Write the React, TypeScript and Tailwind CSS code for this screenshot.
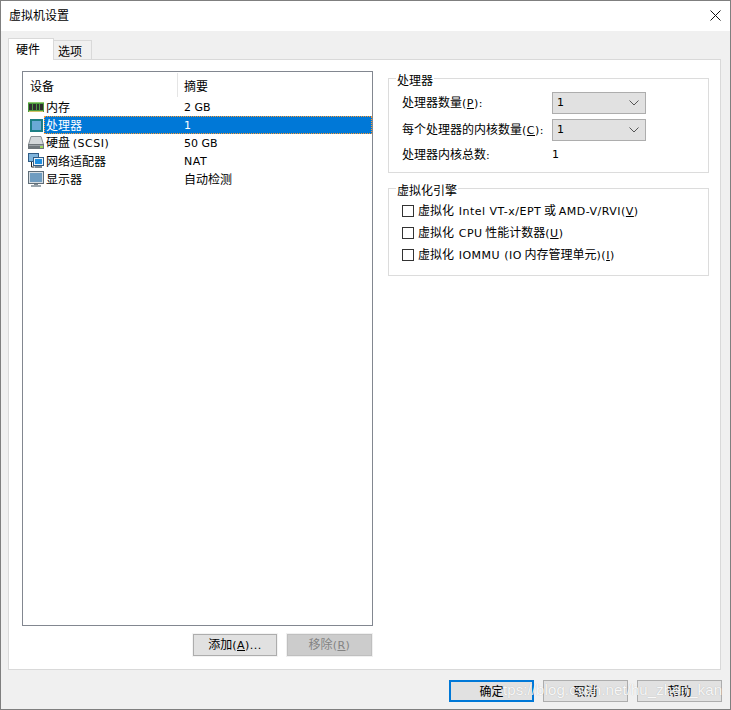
const font = { fontFamily: '"Noto Sans CJK SC", "Liberation Sans", sans-serif' }

// latin runs in the reference are wider than the CJK font's own
function L({ children }: { children: React.ReactNode }) {
  return <span className="font-['DejaVu_Sans'] text-[11px]">{children}</span>
}

function W({ children }: { children: React.ReactNode }) {
  return <span className="font-['DejaVu_Sans'] text-[11px] tracking-[0.5px]">{children}</span>
}

function RamIcon() {
  return (
    <svg width="16" height="16" viewBox="0 0 16 16" className="shrink-0">
      <rect x="0" y="3" width="16" height="10" fill="#4c9a3f" />
      <rect x="0" y="3" width="16" height="1" fill="#8fca6e" />
      <rect x="1" y="5" width="3" height="6" fill="#2e2e2e" />
      <rect x="5" y="5" width="3" height="6" fill="#2e2e2e" />
      <rect x="9" y="5" width="2" height="6" fill="#2e2e2e" />
      <rect x="12" y="5" width="3" height="6" fill="#2e2e2e" />
      <rect x="1" y="12" width="14" height="1" fill="#d4c26a" />
    </svg>
  )
}

function CpuIcon() {
  return (
    <svg width="16" height="16" viewBox="0 0 16 16" className="shrink-0">
      <rect x="2" y="2" width="13" height="13" fill="#1d7f86" />
      <rect x="4" y="4" width="9" height="9" fill="#6aa9d6" />
    </svg>
  )
}

function DiskIcon() {
  return (
    <svg width="16" height="16" viewBox="0 0 16 16" className="shrink-0">
      <path d="M3 1.5h10l2.5 8h-15z" fill="#d3d7da" stroke="#8a9095" />
      <rect x="0" y="9" width="16" height="5" fill="#6f767b" />
      <rect x="1" y="10" width="14" height="1" fill="#9aa0a5" />
      <rect x="12" y="11" width="3" height="2" fill="#9cd65a" />
    </svg>
  )
}

function NetIcon() {
  return (
    <svg width="16" height="16" viewBox="0 0 16 16" className="shrink-0">
      <rect x="0.5" y="0.5" width="10" height="8" fill="#7fb4dc" stroke="#2f5c86" />
      <path d="M3.5 9v5h3" fill="none" stroke="#222" />
      <rect x="5.5" y="4.5" width="10" height="8" fill="#e8f1f8" stroke="#2f5c86" />
      <rect x="7" y="6" width="7" height="5" fill="#1f8fe0" />
      <rect x="7" y="13" width="7" height="2" fill="#7c8790" />
    </svg>
  )
}

function MonitorIcon() {
  return (
    <svg width="16" height="16" viewBox="0 0 16 16" className="shrink-0">
      <rect x="0.5" y="0.5" width="15" height="12" fill="#d5dde3" stroke="#5f6d78" />
      <rect x="2" y="2" width="12" height="9" fill="#6f9cc0" />
      <rect x="6" y="13" width="4" height="1" fill="#7f8a93" />
      <rect x="3" y="14" width="10" height="2" fill="#9aa5ad" />
    </svg>
  )
}

const devices = [
  { name: "内存", summary: <L>2 GB</L>, icon: <RamIcon /> },
  { name: "处理器", summary: <L>1</L>, icon: <CpuIcon />, selected: true },
  { name: <>硬盘 <W>(SCSI)</W></>, summary: <L>50 GB</L>, icon: <DiskIcon /> },
  { name: "网络适配器", summary: <W>NAT</W>, icon: <NetIcon /> },
  { name: "显示器", summary: "自动检测", icon: <MonitorIcon /> },
]

function Combo() {
  return (
    <div className="w-[94px] h-[22px] border border-[#adadad] bg-[#e1e1e1] flex items-center justify-between pl-[4px] pr-[6px]">
      <L>1</L>
      <svg width="10" height="6" viewBox="0 0 10 6">
        <path d="M0.5 0.5L5 5L9.5 0.5" fill="none" stroke="#555" />
      </svg>
    </div>
  )
}

function Check({ children }: { children: React.ReactNode }) {
  return (
    <div className="h-[22px] flex items-center gap-[4px]">
      <div className="w-[12px] h-[12px] border border-[#333] bg-white" />
      <span>
        <span className="mr-[2px]">虚拟化 </span>
        {children}
      </span>
    </div>
  )
}

function Group({ title, className, children }: { title: string; className: string; children: React.ReactNode }) {
  return (
    <div className={`relative border border-[#dcdcdc] ${className}`}>
      <span className="absolute left-[7px] top-[-7px] bg-white px-px leading-[16px]">{title}</span>
      {children}
    </div>
  )
}

export default function App() {
  return (
    <div
      style={font}
      className="relative w-[731px] h-[710px] border border-[#7f7f7f] bg-[#f0f0f0] text-[12px] leading-[18px] text-black overflow-hidden flex flex-col"
    >
      <div className="h-[30px] shrink-0 bg-white flex items-center justify-between pb-[2px] pl-[8px] pr-[9px]">
        <span>虚拟机设置</span>
        <svg width="11" height="11" viewBox="0 0 11 11">
          <path d="M0.5 0.5L10.5 10.5M10.5 0.5L0.5 10.5" stroke="#111" />
        </svg>
      </div>

      <div className="flex-1 flex flex-col px-[7px]">
        <div className="h-[28px] flex items-end relative z-10">
          <div className="w-[46px] h-[22px] mb-[-1px] bg-white border border-b-0 border-[#d9d9d9] flex items-center pl-[7px] pb-[2px]">
            硬件
          </div>
          <div className="w-[38px] h-[19px] border border-b-0 border-l-0 border-[#d9d9d9] bg-[#f0f0f0] flex items-center pl-[4px] pt-px">
            选项
          </div>
        </div>

        <div className="w-[713px] h-[611px] bg-white border border-[#d9d9d9] pt-[11px] pl-[13px] flex gap-[15px]">
          <div className="w-[351px] flex flex-col">
            <div className="w-[351px] h-[555px] border border-[#828790] flex flex-col">
              <div className="h-[25px] flex shrink-0 pt-px">
                <div className="w-[155px] border-r border-[#e5e5e5] pl-[7px] pt-[2px] flex items-center">设备</div>
                <div className="pl-[6px] pt-[2px] flex items-center">摘要</div>
              </div>
              <div className="pt-px">
                {devices.map((d, i) => (
                  <div key={i} className="h-[18px] flex items-center">
                    <div className="w-[21px] pl-[5px] flex items-center shrink-0">{d.icon}</div>
                    <div
                      className={
                        d.selected
                          ? "flex-1 h-[18px] flex items-center bg-[#0078d7] text-white border border-dotted border-[#ff9a30]"
                          : "flex-1 h-[18px] flex items-center border border-transparent"
                      }
                    >
                      <span className="w-[139px] pl-[1px]">{d.name}</span>
                      <span>{d.summary}</span>
                    </div>
                  </div>
                ))}
              </div>
            </div>
            <div className="flex justify-end gap-[10px] mt-[8px] pr-[1px]">
              <button className="w-[84px] h-[22px] border border-[#adadad] bg-[#e1e1e1] outline-1 outline-[#f4f4f4]">
                添加<W>(<span className="underline">A</span>)...</W>
              </button>
              <button className="w-[85px] h-[22px] border border-[#bfbfbf] bg-[#cccccc] text-[#838383] outline-1 outline-[#f0f0f0]">
                移除<W>(<span className="underline">R</span>)</W>
              </button>
            </div>
          </div>

          <div className="w-[321px] flex flex-col gap-[15px] pt-[7px]">
            <Group title="处理器" className="h-[95px] pl-[13px] pt-[13px]">
              <div className="flex items-center h-[22px]">
                <span className="w-[150px]">处理器数量<W>(<span className="underline">P</span>):</W></span>
                <Combo />
              </div>
              <div className="flex items-center h-[22px] mt-[5px]">
                <span className="w-[150px]">每个处理器的内核数量<W>(<span className="underline">C</span>):</W></span>
                <Combo />
              </div>
              <div className="flex items-center h-[18px] mt-[5px]">
                <span className="w-[150px]">处理器内核总数<L>:</L></span>
                <L>1</L>
              </div>
            </Group>
            <Group title="虚拟化引擎" className="h-[88px] pl-[13px] pt-[11px]">
              <Check><W>Intel VT-x/EPT</W> 或 <W>AMD-V/RVI(<span className="underline">V</span>)</W></Check>
              <Check><W>CPU</W> 性能计数器<W>(<span className="underline">U</span>)</W></Check>
              <Check><W>IOMMU (IO</W> 内存管理单元<W>)(<span className="underline">I</span>)</W></Check>
            </Group>
          </div>
        </div>

        <div className="flex justify-end gap-[9px] mt-[10px] pr-[1px]">
          <button className="w-[85px] h-[22px] border-2 border-[#0078d7] bg-[#e1e1e1]">确定</button>
          <button className="w-[85px] h-[22px] border border-[#adadad] bg-[#e1e1e1]">取消</button>
          <button className="w-[85px] h-[22px] border border-[#adadad] bg-[#e1e1e1]">帮助</button>
        </div>
      </div>

      <span className="absolute left-[502px] top-[679px] font-['Liberation_Sans'] text-[15px] tracking-[0.1px] leading-[20px] text-white/90 [text-shadow:0_0_1px_rgba(0,0,0,0.25)] whitespace-nowrap">
        tps://blog.csdn.net/hu_zhen_kan
      </span>
    </div>
  )
}
